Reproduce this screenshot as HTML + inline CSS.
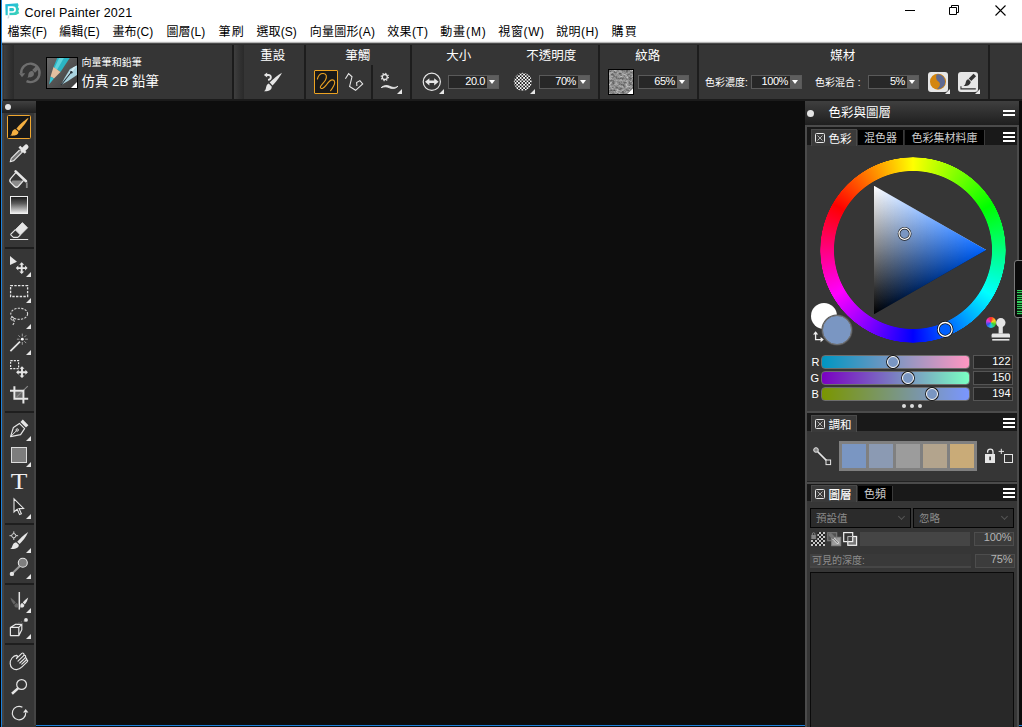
<!DOCTYPE html>
<html lang="zh-Hant">
<head>
<meta charset="utf-8">
<title>Corel Painter 2021</title>
<style>
*{box-sizing:border-box;margin:0;padding:0}
html,body{width:1022px;height:727px;overflow:hidden;background:#0d0d0d}
body{position:relative;font-family:"Liberation Sans","Noto Sans CJK TC",sans-serif;color:#fff;font-size:12px}
.abs{position:absolute}
.cjk{font-family:"Liberation Sans","Noto Sans CJK TC",sans-serif}
svg{position:absolute;overflow:visible}
/* window frame */
#lb0{left:0;top:0;width:1px;height:727px;background:#000}
#lb1{left:1px;top:0;width:1px;height:727px;background:#1c7fd8}
#bb{left:1px;top:725px;width:1021px;height:1px;background:#1c7fd8}
#bb2{left:0;top:726px;width:1022px;height:1px;background:#0a2a4a}
/* title + menu */
#title{left:2px;top:0;width:1020px;height:42px;background:#fff}
#titletxt{left:24.5px;top:4.5px;color:#000;font-size:12.5px;line-height:16px;white-space:nowrap;letter-spacing:0.2px}
.mi{position:absolute;top:24.4px;color:#000;font-size:12px;line-height:17px;white-space:nowrap}
#mshadow{left:2px;top:40px;width:1020px;height:5px;background:linear-gradient(#fbfbfb 0,#fbfbfb 20%,#efefef 20%,#efefef 40%,#b4b4b4 40%,#b4b4b4 60%,#4a4a4a 60%,#4a4a4a 80%,#2b2b2b 80%)}
/* property bar */
#pbar1{left:3px;top:45px;width:229px;height:54px;background:#353535}
#pbar2{left:234px;top:45px;width:788px;height:54px;background:#353535}
.grip{position:absolute;top:0;width:10px;height:54px;background:linear-gradient(90deg,#3e3e3e,#333 50%,#2a2a2a)}
#pgap{left:2px;top:45px;width:1020px;height:56px;background:#1b1b1b;border-left:1px solid #505050}
.vsep{position:absolute;width:2px;background:#1d1d1d}
.plabel{position:absolute;top:49px;font-size:12.5px;line-height:15px;margin-left:-0.8px;color:#fff;white-space:nowrap}
.slabel{position:absolute;top:76px;font-size:10px;line-height:14px;color:#fff;white-space:nowrap}
.inp{position:absolute;top:75px;height:14px;width:51px;background:#272727;border:1px solid #5a5a5a}
.inp b{position:absolute;right:0;top:0;width:11px;height:12px;background:#5e5e5e}
.inp b:after{content:"";position:absolute;left:2px;top:4px;border:4px solid transparent;border-top:4px solid #fff;border-bottom:0;border-left-width:3.5px;border-right-width:3.5px}
.inp span{position:absolute;right:13px;top:-1px;font-size:11px;line-height:13px;color:#fff;font-weight:normal;letter-spacing:-0.4px}
.tri{position:absolute;width:0;height:0;border-left:5px solid transparent;border-bottom:5px solid #e6e6e6}
/* toolbox */
#tbox{left:2px;top:101px;width:34px;height:626px;background:#363636}
#tboxhead{left:2px;top:101px;width:34px;height:12px;background:linear-gradient(#404040,#202020)}
.tsep{position:absolute;left:5px;width:29px;height:2px;background:#1e1e1e}
/* right panel */
#rp{left:805px;top:101px;width:214px;height:626px;background:#3b3b3b}
#rpblack{left:1019px;top:101px;width:3px;height:624px;background:#0b0b0b}
#rphead{left:805px;top:101px;width:214px;height:24px;background:linear-gradient(#3f3f3f,#1f1f1f)}
.tabbar{position:absolute;left:807px;width:210px;background:#191919}
.tabA{position:absolute;background:#3a3a3a;border-top:1px solid #4a4a4a;border-left:1px solid #4a4a4a;border-right:1px solid #4a4a4a}
.tabI{position:absolute;background:#000;color:#cfcfcf;font-size:11px;line-height:16px;text-align:center;white-space:nowrap;box-shadow:1px 0 0 #3a3a3a,-1px 0 0 #2c2c2c}
.tabtxt{position:absolute;font-size:11.5px;line-height:14px;margin-top:0.6px;margin-left:-0.5px;color:#fff;white-space:nowrap}
.xbox{position:absolute;width:10px;height:10px;border:1px solid #e8e8e8;border-radius:1.5px}
.ham{position:absolute;left:1003px;width:12px;height:2px;background:#fff}
.pbody{position:absolute;left:807px;width:210px;background:#363636}

.rgbl{font-size:11px;line-height:14px;color:#fff}
.sl{left:821px;width:149px;height:14px;border-radius:4px;border:1px solid #6e6e6e}
.th{width:12px;height:12px;border-radius:50%;background:#7a96c2;border:1.2px solid #fff;box-shadow:0 0 0 0.9px #151515}
.vb{left:973px;width:40px;height:14px;background:#262626;border:1px solid #555}
.vb span{position:absolute;right:1.5px;top:-2.5px;font-size:11px;line-height:14px;color:#fff;letter-spacing:0px}
.dot3{top:404px;width:4px;height:4px;border-radius:50%;background:#dcdcdc}
.sw{top:444px;width:24px;height:24px}
.dd{top:508px;height:20px;background:#2b2b2b;border:1px solid #050505}
.dd span{position:absolute;left:5px;top:2px;font-size:10.5px;line-height:14px;color:#8a8a8a;white-space:nowrap}
.dd i{position:absolute;right:6px;top:5px;width:5px;height:5px;border-right:1px solid #555;border-bottom:1px solid #555;transform:rotate(45deg)}
.pv{height:14px;background:#3c3c3c;border:1px solid #4d4d4d}
.pv span{position:absolute;right:1.5px;top:-3.5px;font-size:11px;line-height:14px;color:#b4b4b4;letter-spacing:-0.1px}
</style>
</head>
<body>
<!-- TITLE -->
<div class="abs" id="title"></div>
<div class="abs" id="titletxt">Corel Painter 2021</div>
<!-- MENU -->
<div class="mi" style="left:7.5px;letter-spacing:0.07px">檔案(F)</div>
<div class="mi" style="left:59.2px;letter-spacing:0.12px">編輯(E)</div>
<div class="mi" style="left:112.5px;letter-spacing:0.03px">畫布(C)</div>
<div class="mi" style="left:166.6px;letter-spacing:0px">圖層(L)</div>
<div class="mi" style="left:218.5px;letter-spacing:1.3px">筆刷</div>
<div class="mi" style="left:256.5px;letter-spacing:0.08px">選取(S)</div>
<div class="mi" style="left:309.8px;letter-spacing:0.2px">向量圖形(A)</div>
<div class="mi" style="left:387.2px;letter-spacing:0.35px">效果(T)</div>
<div class="mi" style="left:440.2px;letter-spacing:0.9px">動畫(M)</div>
<div class="mi" style="left:498.3px;letter-spacing:0.62px">視窗(W)</div>
<div class="mi" style="left:556.2px;letter-spacing:0.43px">說明(H)</div>
<div class="mi" style="left:611.5px;letter-spacing:1.3px">購買</div>
<div class="abs" id="mshadow"></div>
<!-- PROPERTY BAR -->
<div class="abs" id="pgap"></div>
<div class="abs" id="pbar1"><div class="grip" style="left:1px"></div></div>
<div class="abs" id="pbar2"><div class="grip" style="left:0"></div></div>
<!-- app icon -->
<svg style="left:5px;top:3px" width="15" height="15" viewBox="0 0 15 15">
  <defs><linearGradient id="ig" x1="0" y1="0" x2="1" y2="1"><stop offset="0" stop-color="#18b4e4"/><stop offset="1" stop-color="#3fd6b4"/></linearGradient></defs>
  <path d="M0.3 1.2 L12.8 0.2 L13.6 2.2 L12.9 4 L14.2 6 L13.2 8 L14.3 10.2 L11 12 L0.6 12.2 Z" fill="url(#ig)"/>
  <path d="M3.6 12.6 V4.2 H7.7 A2.4 2.4 0 0 1 7.7 9 H3.6" fill="none" stroke="#fff" stroke-width="1.7"/>
  <path d="M3.6 12.4 V14.4 L2.6 15.4" fill="none" stroke="#d4d9de" stroke-width="1.3"/>
</svg>
<!-- window controls -->
<svg style="left:900px;top:0" width="122" height="22" viewBox="0 0 122 22" fill="none" stroke="#000" stroke-width="1">
  <path d="M5 10.5 H15"/>
  <path d="M49.5 7.5 H56.5 V14.5 H49.5 Z M51.5 7.5 V5.5 H58.5 V12.5 H56.5"/>
  <path d="M95.5 5.5 L105.5 15.5 M105.5 5.5 L95.5 15.5" stroke-width="1.1"/>
</svg>

<!-- brush selector -->
<svg style="left:19px;top:62px" width="23" height="23" viewBox="0 0 23 23" fill="none" stroke="#6e6e6e">
  <path d="M7.5 19.2 A9.2 9.2 0 1 0 2.2 11.4" stroke-width="2.4"/>
  <path d="M0 11.3 L6.2 11.3 L3 15.2 Z" fill="#6e6e6e" stroke="none"/>
  <path d="M18.6 5.4 L14.6 9.4" stroke-width="4"/>
  <path d="M13.6 9.2 C15.6 10.6 15.4 13.6 13 14.8 C11.4 15.6 9.6 15 8.4 16 C9.4 14.6 9 13 9.6 11.4 C10.2 9.6 12 8.6 13.6 9.2 Z" fill="#6e6e6e" stroke="none"/>
</svg>
<div class="abs" style="left:46px;top:57px;width:32px;height:32px;background:linear-gradient(135deg,#6a6a6a,#3c3c3c);border:1px solid #000;overflow:hidden">
  <svg style="left:0;top:0" width="30" height="30" viewBox="0 0 30 30">
    <path d="M11 -2 L24 -2 L13.5 14 L6.5 9 Z" fill="#2bb5c4"/>
    <path d="M13 -2 L18 -2 L10 12 L7.5 10 Z" fill="#5fd3dc"/>
    <path d="M6.5 9 L13.5 14 L7 20.5 L3.5 18.5 Z" fill="#e2bfa0"/>
    <path d="M3.5 18.5 L7 20.5 L2 26.5 Z" fill="#35c3d3"/>
    <path d="M30 7.5 L23 11 L17.5 20 L14 27 L21 23 L30 17 Z" fill="#a9d4e0"/>
    <path d="M30 7.5 L26 9.5 L20 18 L14 27 L24.5 15 Z" fill="#d5edf3"/>
    <path d="M14 27 L24 14.5" stroke="#26323a" stroke-width="1.2"/>
    <circle cx="24.3" cy="14.3" r="1.3" fill="#26323a"/>
    <path d="M30 24 V30 H24 Z" fill="#fff"/>
  </svg>
</div>
<div class="abs" style="left:81.5px;top:56px;font-size:10px;line-height:13px;white-space:nowrap;letter-spacing:0.05px">向量筆和鉛筆</div>
<div class="abs" style="left:81.5px;top:73px;font-size:13.4px;line-height:18px;white-space:nowrap">仿真 2B 鉛筆</div>

<!-- separators -->
<div class="vsep" style="left:304px;top:45px;height:54px"></div>
<div class="vsep" style="left:371px;top:65px;height:34px"></div>
<div class="vsep" style="left:410px;top:45px;height:54px"></div>
<div class="vsep" style="left:598px;top:45px;height:54px"></div>
<div class="vsep" style="left:697px;top:45px;height:54px"></div>
<div class="vsep" style="left:988px;top:45px;height:54px"></div>

<!-- labels -->
<div class="plabel" style="left:261px">重設</div>
<div class="plabel" style="left:346px">筆觸</div>
<div class="plabel" style="left:447px">大小</div>
<div class="plabel" style="left:527px">不透明度</div>
<div class="plabel" style="left:636px">紋路</div>
<div class="plabel" style="left:831px">媒材</div>

<!-- reset brush icon -->
<svg style="left:263px;top:72px" width="20" height="20" viewBox="0 0 20 20">
  <path d="M18.9 0.8 C15 3 9.6 7.6 6.7 10.5 L9.5 13.6 C12.6 10.4 17 5 18.9 0.8 Z" fill="#e6e6e6"/>
  <path d="M5.7 11.4 L8.7 14.4 C9 17.2 6.6 19.4 1 19.2 C3 18 2.8 16 3.4 14.2 C3.8 12.8 4.7 11.8 5.7 11.4 Z" fill="#e6e6e6"/>
  <path d="M3.6 3 H5.4 C8.6 3 8.8 7.6 5 7.9" fill="none" stroke="#e6e6e6" stroke-width="1.9"/>
  <path d="M4.2 0.4 L0.9 3 L4.2 5.6 Z" fill="#e6e6e6"/>
</svg>

<!-- stroke type buttons -->
<div class="abs" style="left:314px;top:70px;width:24px;height:24px;background:#191919;border:1px solid #eba222;border-radius:1px"></div>
<svg style="left:314px;top:70px" width="24" height="24" viewBox="0 0 24 24" fill="none" stroke="#eba222" stroke-width="1.1" stroke-linecap="round">
  <path d="M3.4 9 C4.4 5.2 7 3.3 9.4 3.5 C12.8 3.8 13 7 11.5 10 C10 13 5.6 15.6 6.4 17.6 C7.2 19.5 10 18 12.2 15.2 C14 12.6 16 9.6 18.6 9.9 C21.4 10.3 21 13.5 19.6 16 C18.8 17.6 17.8 19.2 16.6 20.6"/>
</svg>
<svg style="left:344px;top:72px" width="20" height="20" viewBox="0 0 20 20" fill="none" stroke="#e6e6e6" stroke-width="1.1" stroke-linejoin="miter">
  <path d="M1.4 6.8 L4.6 1.6 L8 4.8 L5.6 14.4 L11.6 18.3 L18.7 12 L15.9 8.6 L12.6 10.6 L12.9 14"/>
</svg>
<svg style="left:379px;top:72px" width="24" height="24" viewBox="0 0 24 24" fill="none" stroke="#e6e6e6">
  <circle cx="5.8" cy="5" r="2.5" stroke-width="1.3"/>
  <circle cx="5.8" cy="5" r="3.6" stroke-width="1.2" stroke-dasharray="1.25 1.58"/>
  <path d="M2.2 15.6 C4.4 13.6 7.6 12.9 10 14 C12.6 15.2 15.4 16.4 19 14.2 C16 17.4 12.6 16.8 10 15.6 C7.4 14.4 5 14.6 2.2 15.6 Z" fill="#e6e6e6" stroke-width="0.9" stroke-linejoin="round"/>
</svg>
<div class="tri" style="left:397px;top:89px"></div>

<!-- size -->
<svg style="left:422px;top:72.4px" width="20" height="20" viewBox="0 0 20 20">
  <circle cx="9.8" cy="9.8" r="8.6" fill="none" stroke="#e6e6e6" stroke-width="1.2"/>
  <path d="M3 9.8 L7.4 6.2 V8.6 H12.2 V6.2 L16.6 9.8 L12.2 13.4 V11 H7.4 V13.4 Z" fill="#e6e6e6"/>
</svg>
<div class="tri" style="left:439px;top:89px"></div>
<div class="inp" style="left:448px"><span>20.0</span><b></b></div>

<!-- opacity -->
<svg style="left:513px;top:72px" width="20" height="20" viewBox="0 0 20 20">
  <defs>
    <pattern id="chk" width="3.4" height="3.4" patternUnits="userSpaceOnUse"><rect width="3.4" height="3.4" fill="#fff"/><rect width="1.7" height="1.7" fill="#1c1c1c"/><rect x="1.7" y="1.7" width="1.7" height="1.7" fill="#1c1c1c"/></pattern>
  </defs>
  <circle cx="9.8" cy="9.8" r="9" fill="url(#chk)"/>
</svg>
<div class="tri" style="left:530px;top:89px"></div>
<div class="inp" style="left:539px"><span>70%</span><b></b></div>

<!-- grain -->
<div class="abs" style="left:608px;top:69px;width:26px;height:26px;border:1px solid #000;background:#8f8f8f;overflow:hidden">
  <svg style="left:0;top:0" width="24" height="24" viewBox="0 0 24 24">
    <filter id="nz" x="0" y="0" width="100%" height="100%" color-interpolation-filters="sRGB"><feTurbulence type="fractalNoise" baseFrequency="0.3 0.5" numOctaves="3" seed="7"/><feColorMatrix type="matrix" values="0.8 0 0 0 0.15  0.8 0 0 0 0.15  0.8 0 0 0 0.15  0 0 0 0 1"/></filter>
    <rect width="24" height="24" fill="#777"/>
    <rect width="24" height="24" filter="url(#nz)"/>
    <path d="M24 18.5 V24 H18.5 Z" fill="#fff"/>
  </svg>
</div>
<div class="inp" style="left:638px"><span>65%</span><b></b></div>

<!-- media -->
<div class="slabel" style="left:705px">色彩濃度:</div>
<div class="inp" style="left:751px"><span>100%</span><b></b></div>
<div class="slabel" style="left:815px">色彩混合 :</div>
<div class="inp" style="left:868px"><span>5%</span><b></b></div>

<div class="abs" style="left:928px;top:72px;width:20px;height:20px;background:#e6e6e6;border-radius:3px"></div>
<svg style="left:928px;top:72px" width="20" height="20" viewBox="0 0 20 20">
  <circle cx="10" cy="9.65" r="8" fill="#d4860f"/>
  <path d="M8.6 2.5 A7.3 7.3 0 1 1 9 16.9 C12.4 14.8 12.8 11.2 10.4 9.6 C8 8 7.6 5 8.6 2.5 Z" fill="#5f6a92"/>
</svg>
<div class="tri" style="left:945px;top:89px"></div>
<div class="abs" style="left:958px;top:72px;width:20px;height:20px;background:#e6e6e6;border-radius:3px"></div>
<svg style="left:958px;top:72px" width="20" height="20" viewBox="0 0 20 20" fill="#333">
  <path d="M16.8 3 L12 7.8" stroke="#333" stroke-width="3.6" fill="none"/>
  <path d="M10.5 7.3 L12.7 9.7 C12.5 12.6 9.6 14.4 5.6 14 C7.6 12.8 7.4 11 8 9.4 C8.5 8 9.5 7.3 10.5 7.3 Z"/>
  <path d="M2.4 14.2 H3.5 V16.2 H17.8 V17.6 H2.4 Z"/>
</svg>
<div class="tri" style="left:975px;top:89px"></div>


<div class="abs" id="bb"></div>
<!-- TOOLBOX -->
<div class="abs" id="tbox"></div>
<div class="abs" id="tboxhead"></div>
<div class="abs" style="left:2px;top:113px;width:2px;height:612px;background:#424242"></div>
<div class="abs" style="left:34px;top:113px;width:2px;height:612px;background:#444"></div>
<div class="abs" style="left:4.7px;top:103.8px;width:6.6px;height:6.6px;border-radius:50%;background:#e4e4e4"></div>
<!-- brush (selected) -->
<div class="abs" style="left:7px;top:115px;width:24px;height:24px;background:#171717;border:1px solid #f0a72e;border-radius:1.5px"></div>
<svg style="left:7px;top:115px" width="24" height="24" viewBox="0 0 24 24" fill="#f5b041">
  <path d="M21.6 2.8 C17 5.4 11.6 10.8 9.4 13.6 L12 16 C14.6 13.2 19.4 7.8 21.6 2.8 Z"/>
  <path d="M8.6 14.2 L11.4 16.8 C11.6 19.8 8.4 21.2 3 20.6 C5.2 19.6 4.6 17.6 5.6 15.8 C6.3 14.6 7.5 14 8.6 14.2 Z"/>
</svg>
<!-- eyedropper  center y 153 -->
<svg style="left:7px;top:141px" width="24" height="24" viewBox="0 0 24 24" fill="none" stroke="#e6e6e6">
  <path d="M15.6 9.4 L19.2 5.8" stroke-width="4.6" stroke-linecap="round"/>
  <path d="M12.4 5.6 L18.6 11.8" stroke-width="2.6"/>
  <path d="M12.6 9 L4.2 17.4 L3.2 20.8 L6.6 19.8 L15 11.4" stroke-width="1.1" fill="#777" stroke-linejoin="round"/>
</svg>
<!-- bucket center y 179 -->
<svg style="left:7px;top:167px" width="24" height="24" viewBox="0 0 24 24" fill="none" stroke="#e6e6e6">
  <path d="M5.6 13.6 H16 L11 19.2 C10 20.2 8.6 20.2 7.6 19.2 L4.4 16 C3.8 15.2 4.4 14.2 5.6 13.6 Z" fill="#8c8c8c" stroke="none"/>
  <path d="M8.8 5.6 L3.8 11.4 C2.6 12.8 2.6 14.4 3.8 15.6 L7.4 19.2 C8.6 20.4 10.2 20.4 11.4 19.2 L16.6 13.4" stroke-width="1.3"/>
  <path d="M8.6 4.4 L19 14.2" stroke-width="2.6" stroke-linecap="round"/>
  <path d="M19.8 15.4 V21" stroke="#8a8a8a" stroke-width="1.8"/>
</svg>
<!-- gradient center y 205 -->
<div class="abs" style="left:10px;top:196px;width:18px;height:18px;border:1px solid #f0f0f0;background:linear-gradient(#1c1c1c,#5a5a5a 40%,#eaeaea)"></div>
<!-- eraser center y 231 -->
<svg style="left:7px;top:219px" width="24" height="24" viewBox="0 0 24 24" fill="none" stroke="#e6e6e6">
  <path d="M15.4 3.6 L20.6 8.8 L13.4 16 L8.2 10.8 Z" fill="#e6e6e6" stroke-width="0.8" stroke-linejoin="round"/>
  <path d="M8.2 10.8 L4 15 C3.6 15.4 3.6 15.8 4 16.2 L6.4 18.4 H10.8 L13.4 16" stroke-width="1.1" stroke-linejoin="round"/>
  <path d="M3 20.5 H21.2" stroke-width="1"/>
</svg>
<div class="tsep" style="top:247px"></div>
<!-- move center y 265 -->
<svg style="left:7px;top:253px" width="24" height="24" viewBox="0 0 24 24" fill="#e6e6e6">
  <path d="M3 3 V12 L10 8.8 Z"/>
  <path d="M14.70 9.20 L17.20 11.70 L15.65 11.70 L15.65 14.15 L18.10 14.15 L18.10 12.60 L20.60 15.10 L18.10 17.60 L18.10 16.05 L15.65 16.05 L15.65 18.50 L17.20 18.50 L14.70 21.00 L12.20 18.50 L13.75 18.50 L13.75 16.05 L11.30 16.05 L11.30 17.60 L8.80 15.10 L11.30 12.60 L11.30 14.15 L13.75 14.15 L13.75 11.70 L12.20 11.70 Z"/>
</svg>
<div class="tri" style="left:26px;top:272px"></div>
<!-- rect select center y 291 -->
<svg style="left:7px;top:279px" width="24" height="24" viewBox="0 0 24 24" fill="none" stroke="#e6e6e6">
  <rect x="3.6" y="6.7" width="17" height="10.8" stroke-width="1.3" stroke-dasharray="2.4 1.3"/>
</svg>
<div class="tri" style="left:26px;top:298px"></div>
<!-- lasso center y 317 -->
<svg style="left:7px;top:305px" width="24" height="24" viewBox="0 0 24 24" fill="none" stroke="#d8d8d8">
  <ellipse cx="12.2" cy="8.8" rx="8.4" ry="5.6" stroke-width="1.1" stroke-dasharray="2.2 1.3"/>
  <circle cx="5.4" cy="13.6" r="1.5" stroke-width="1"/>
  <path d="M6.6 14.8 C8 16.6 7 19 5 20.6" stroke-width="1.1" stroke-dasharray="2.2 1.2"/>
</svg>
<div class="tri" style="left:26px;top:324px"></div>
<!-- wand center y 343 -->
<svg style="left:7px;top:331px" width="24" height="24" viewBox="0 0 24 24" fill="none" stroke="#e6e6e6">
  <path d="M3.4 20.2 L13 10.6" stroke-width="1.7"/>
  <circle cx="15.3" cy="8.2" r="1.4" fill="#fff" stroke="none"/>
  <g stroke="#a8a8a8" stroke-width="0.9">
    <path d="M15.3 5.4 V2.6 M15.3 11 V13.8 M18.1 8.2 H20.9 M12.5 8.2 H9.9 M17.3 6.2 L19.2 4.3 M13.3 6.2 L11.5 4.4 M17.3 10.2 L19.2 12.1"/>
  </g>
</svg>
<div class="tri" style="left:26px;top:350px"></div>
<!-- transform select center y 369 -->
<svg style="left:7px;top:357px" width="24" height="24" viewBox="0 0 24 24" fill="#e6e6e6">
  <rect x="3.6" y="3.6" width="8" height="8" fill="none" stroke="#e6e6e6" stroke-width="1.2" stroke-dasharray="2.1 1.1"/>
  <path d="M15.00 9.30 L17.50 11.80 L15.95 11.80 L15.95 14.25 L18.40 14.25 L18.40 12.70 L20.90 15.20 L18.40 17.70 L18.40 16.15 L15.95 16.15 L15.95 18.60 L17.50 18.60 L15.00 21.10 L12.50 18.60 L14.05 18.60 L14.05 16.15 L11.60 16.15 L11.60 17.70 L9.10 15.20 L11.60 12.70 L11.60 14.25 L14.05 14.25 L14.05 11.80 L12.50 11.80 Z"/>
</svg>
<!-- crop center y 395 -->
<svg style="left:7px;top:383px" width="24" height="24" viewBox="0 0 24 24" fill="none" stroke="#e6e6e6">
  <rect x="8.4" y="8.8" width="7" height="6.2" fill="#666" stroke="none"/>
  <path d="M9.6 14.2 L20.8 3.2" stroke="#8a8a8a" stroke-width="1.1"/>
  <path d="M7.4 3.2 V15.8 H21.2 M3 7.8 H16.4 V20.6" stroke-width="2"/>
</svg>
<div class="tsep" style="top:411px"></div>
<!-- pen center y 429 -->
<svg style="left:7px;top:417px" width="24" height="24" viewBox="0 0 24 24" fill="none" stroke="#e6e6e6">
  <path d="M14.6 3.8 L20.2 9.4" stroke-width="3.4"/>
  <path d="M3.6 19.6 L6.4 10.4 L12.4 6.4 L17.6 11.6 L13.6 17.6 Z" stroke-width="1.2" stroke-linejoin="round"/>
  <path d="M3.8 19.4 L9.6 13.6" stroke-width="1"/>
  <circle cx="10.2" cy="13" r="1.2" stroke-width="1"/>
</svg>
<div class="tri" style="left:26px;top:436px"></div>
<!-- shape center y 455 -->
<div class="abs" style="left:11px;top:447px;width:16px;height:16px;background:#7d7d7d;border:1px solid #dcdcdc"></div>
<div class="tri" style="left:26px;top:462px"></div>
<!-- text center y 481 -->
<svg style="left:7px;top:469px" width="24" height="24" viewBox="0 0 24 24">
  <text x="12.2" y="20" text-anchor="middle" font-family="Liberation Serif, serif" font-size="23.5" fill="#f0f0f0" transform="translate(12.2 0) scale(1.16 1) translate(-12.2 0)">T</text>
</svg>
<!-- arrow center y 507 -->
<svg style="left:7px;top:495px" width="24" height="24" viewBox="0 0 24 24" fill="#2a2a2a" stroke="#e6e6e6">
  <path d="M7 3.8 V17 L10.2 14.2 L12.6 19.6 L14.4 18.8 L12 13.6 L16.6 13.4 Z" stroke-width="1.1" stroke-linejoin="miter"/>
</svg>
<div class="tri" style="left:26px;top:514px"></div>
<div class="tsep" style="top:523px"></div>
<!-- clone center y 541 -->
<svg style="left:7px;top:529px" width="24" height="24" viewBox="0 0 24 24" fill="#e6e6e6">
  <path d="M21.2 3 C17 5.6 12.6 10 10.2 12.8 L12.6 15 C15.2 12.4 19.2 8 21.2 3 Z"/>
  <path d="M9.4 13.6 L11.8 15.8 C12 18.4 9.4 20.4 3.2 20 C5.2 19 5 17.2 6 15.4 C6.8 14.1 8.2 13.4 9.4 13.6 Z"/>
  <g fill="none" stroke="#e6e6e6" stroke-width="0.9"><circle cx="6.8" cy="6.7" r="2.1"/><path d="M6.8 2.4 V4.6 M6.8 8.8 V11 M2.5 6.7 H4.7 M8.9 6.7 H11.1"/></g>
</svg>
<div class="tri" style="left:26px;top:548px"></div>
<!-- dodge center y 567 -->
<svg style="left:7px;top:555px" width="24" height="24" viewBox="0 0 24 24">
  <path d="M12.6 11.2 L5 18.8" stroke="#9a9a9a" stroke-width="2"/>
  <circle cx="15.8" cy="7.8" r="4.5" fill="#7e7e7e" stroke="#e6e6e6" stroke-width="1.1"/>
  <circle cx="4.9" cy="18.9" r="2.2" fill="#e6e6e6"/>
</svg>
<div class="tri" style="left:26px;top:574px"></div>
<div class="tsep" style="top:583px"></div>
<!-- mirror center y 601 -->
<svg style="left:7px;top:589px" width="24" height="24" viewBox="0 0 24 24">
  <path d="M12.3 3 V20.6" stroke="#e6e6e6" stroke-width="1.5"/>
  <path d="M21.2 8.4 C19 9.8 17 12 15.8 13.4 L17.8 15.4 C19.2 13.8 20.6 11.2 21.2 8.4 Z" fill="#e6e6e6"/>
  <path d="M15.2 13.9 L17.3 16 C17.5 18 15.6 19 13.4 18.4 C13 16 13.6 14.2 15.2 13.9 Z" fill="#e6e6e6"/>
  <path d="M3.4 8.4 C5.6 9.8 7.6 12 8.8 13.4 L6.8 15.4 C5.4 13.8 4 11.2 3.4 8.4 Z" fill="#666"/>
  <path d="M9.4 13.9 L7.3 16 C7.1 18 9 19 11.2 18.4 C11.6 16 11 14.2 9.4 13.9 Z" fill="#666"/>
</svg>
<div class="tri" style="left:26px;top:608px"></div>
<!-- cube center y 627 -->
<svg style="left:7px;top:615px" width="24" height="24" viewBox="0 0 24 24" fill="none" stroke="#e6e6e6">
  <path d="M3.4 12.4 H11.8 V20.6 H3.4 Z M3.4 12.4 L8.2 9.4 H14.8 L11.8 12.4 M14.8 9.4 V14.8 L11.8 20.6" stroke-width="1.2" stroke-linejoin="round"/>
  <path d="M18 6 L14.8 9.4 M17.6 5.6 L9 9" stroke="#777" stroke-width="0.8" stroke-dasharray="1.4 1.4"/>
  <circle cx="19" cy="4.9" r="1.9" fill="#e6e6e6" stroke="none"/>
</svg>
<div class="tri" style="left:26px;top:634px"></div>
<div class="tsep" style="top:643px"></div>
<!-- hand center y 661 -->
<svg style="left:7px;top:649px" width="24" height="24" viewBox="0 0 24 24" fill="none" stroke="#e6e6e6" stroke-width="1.15" stroke-linecap="round" stroke-linejoin="round">
  <path d="M9.6 6.4 C6.2 6.6 3 10.4 3.2 14.6 C3.4 18.6 6.4 20.8 9.6 20.6 C12 20.4 13.4 19.4 15 17.8 L20.4 12.6 C21.2 11.6 20.2 10.4 19.2 11 C20.2 9.8 19.4 8.4 18.2 8.8 C19.2 7.4 18.4 5.8 17 6.4 C17.4 4.6 16 3.4 14.8 4.4 L9.4 9.6 C10.6 8.2 10.8 6.6 9.6 6.4 Z"/>
  <path d="M17 6.4 L11 12.2 M18.2 8.8 L12.8 14 M19.2 11 L14.8 15.2"/>
</svg>
<!-- zoom center y 687 -->
<svg style="left:7px;top:675px" width="24" height="24" viewBox="0 0 24 24" fill="none" stroke="#e6e6e6">
  <circle cx="14.6" cy="9.5" r="4.9" stroke-width="1.2"/>
  <path d="M11 13.4 L5 18.8" stroke-width="2.6"/>
</svg>
<!-- rotate center y 713 -->
<svg style="left:7px;top:701px" width="24" height="24" viewBox="0 0 24 24" fill="none" stroke="#e6e6e6">
  <path d="M18.7 11.6 A6.7 6.7 0 1 1 15.4 6.3" stroke-width="1.2"/>
  <path d="M18.7 8 L21.4 11.6 H16 Z" fill="#e6e6e6" stroke="none"/>
</svg>

<!-- RIGHT PANEL -->
<div class="abs" id="rp"></div>
<div class="abs" id="rpblack"></div>
<div class="abs" id="rphead"></div>
<!-- header -->
<div class="abs" style="left:807.3px;top:109.6px;width:7px;height:7px;border-radius:50%;background:#e4e4e4"></div>
<div class="abs" style="left:828.5px;top:105px;font-size:12.5px;line-height:16px;white-space:nowrap">色彩與圖層</div>
<div class="ham" style="top:110px"></div><div class="ham" style="top:114px"></div>
<div class="abs" style="left:805px;top:125px;width:214px;height:2px;background:#4b4b4b"></div>
<div class="abs" style="left:805px;top:127px;width:2px;height:600px;background:#4b4b4b"></div>
<div class="abs" style="left:1017px;top:127px;width:2px;height:600px;background:#4b4b4b"></div>

<!-- COLOR panel -->
<div class="tabbar" style="top:127px;height:18px"></div>
<div class="pbody" style="top:145px;height:267px"></div>
<div class="tabA" style="left:811px;top:129px;width:46px;height:17px"></div>
<div class="xbox" style="left:815px;top:133px"></div>
<svg style="left:815px;top:133px" width="10" height="10" viewBox="0 0 10 10"><path d="M2.5 2.5 L7.5 7.5 M7.5 2.5 L2.5 7.5" stroke="#b0b0b0" stroke-width="1"/></svg>
<div class="tabtxt" style="left:829px;top:131px">色彩</div>
<div class="tabI" style="left:858px;top:130px;width:45px;height:15px">混色器</div>
<div class="tabI" style="left:905px;top:130px;width:79px;height:15px">色彩集材料庫</div>
<div class="ham" style="top:132px"></div><div class="ham" style="top:136px"></div><div class="ham" style="top:140px"></div>

<!-- wheel -->
<div class="abs" style="left:819.5px;top:157.3px;width:186px;height:186px;border-radius:50%;background:conic-gradient(#ffff00,#00ff00 60deg,#00ffff 120deg,#0000ff 180deg,#ff00ff 240deg,#ff0000 300deg,#ffff00 360deg);-webkit-mask:radial-gradient(circle closest-side,transparent 78.6px,#000 79.4px,#000 92.4px,transparent 93px);mask:radial-gradient(circle closest-side,transparent 78.6px,#000 79.4px,#000 92.4px,transparent 93px)"></div>
<div class="abs" style="left:874px;top:185.8px;width:112.2px;height:128.4px;clip-path:polygon(0 0,100% 50%,0 100%);background:linear-gradient(90deg,rgba(0,99,255,0),rgba(0,99,255,1)),conic-gradient(from 230.26deg at 100% 50%,#000 0deg,rgb(0,0,0) 10.00deg,rgb(24,24,24) 14.74deg,rgb(46,46,46) 19.74deg,rgb(68,68,68) 24.74deg,rgb(88,88,88) 29.74deg,rgb(108,108,108) 34.74deg,rgb(128,128,128) 39.74deg,rgb(147,147,147) 44.74deg,rgb(167,167,167) 49.74deg,rgb(187,187,187) 54.74deg,rgb(209,209,209) 59.74deg,rgb(231,231,231) 64.74deg,rgb(255,255,255) 69.48deg,#fff 90deg,#000 200deg)"></div>
<svg style="left:894px;top:223px" width="22" height="22" viewBox="894 223 22 22">
  <circle cx="904.6" cy="233.8" r="5.6" fill="#7a96c2" stroke="#1a1a1a" stroke-width="2.6"/>
  <circle cx="904.6" cy="233.8" r="5.6" fill="none" stroke="#fff" stroke-width="1.2"/>
</svg>
<svg style="left:930px;top:315px" width="30" height="30" viewBox="930 315 30 30">
  <circle cx="945.2" cy="329.4" r="6.9" fill="#0060ff" stroke="#111" stroke-width="2.8"/>
  <circle cx="945.2" cy="329.4" r="6.9" fill="none" stroke="#fff" stroke-width="1.3"/>
</svg>
<!-- swatches -->
<div class="abs" style="left:810.5px;top:303px;width:26px;height:26px;border-radius:50%;background:#fff"></div>
<div class="abs" style="left:821.5px;top:314.5px;width:30px;height:30px;border-radius:50%;background:#7a96c2;border:1.5px solid #6f6f6f;box-shadow:0 0 0 0.6px #555"></div>
<svg style="left:811px;top:329px" width="14" height="14" viewBox="0 0 14 14" fill="none" stroke="#f0f0f0" stroke-width="1.3">
  <path d="M4.6 3.4 V10.6 H11.4"/>
  <path d="M2 5.4 L4.6 2.2 L7.2 5.4 Z M9.6 8 L12.8 10.6 L9.6 13.2 Z" fill="#f0f0f0" stroke="none"/>
</svg>
<!-- stamp icon -->
<div class="abs" style="left:986px;top:317.4px;width:10.4px;height:10.4px;border-radius:50%;background:conic-gradient(#ff2a2a,#ffd21f 60deg,#38d430 120deg,#22c6e8 180deg,#3a4cf0 240deg,#e83ad8 300deg,#ff2a2a 360deg)"></div>
<svg style="left:990px;top:316px" width="22" height="27" viewBox="0 0 22 27" fill="#e4e4e4">
  <circle cx="10.8" cy="6.8" r="4.7"/>
  <path d="M8.6 8 H12.8 V17.6 H8.6 Z"/>
  <path d="M3.2 17.6 H18.4 C19.4 17.6 20 18.2 20 19.2 V21.6 H1.6 V19.2 C1.6 18.2 2.2 17.6 3.2 17.6 Z"/>
  <rect x="2.2" y="23" width="17.2" height="1.6"/>
</svg>
<!-- RGB sliders -->
<div class="abs rgbl" style="left:811.5px;top:354.5px">R</div>
<div class="abs rgbl" style="left:810.5px;top:370.5px">G</div>
<div class="abs rgbl" style="left:811.5px;top:386.5px">B</div>
<div class="abs sl" style="top:355px;background:linear-gradient(90deg,#0096c2,#ff96c2)"></div>
<div class="abs sl" style="top:371px;background:linear-gradient(90deg,#7a00c2,#7affc2)"></div>
<div class="abs sl" style="top:387px;background:linear-gradient(90deg,#7a9600,#7a96ff)"></div>
<div class="abs th" style="left:886.9px;top:355.8px"></div>
<div class="abs th" style="left:902.1px;top:371.8px"></div>
<div class="abs th" style="left:926px;top:387.8px"></div>
<div class="abs vb" style="top:355px"><span>122</span></div>
<div class="abs vb" style="top:371px"><span>150</span></div>
<div class="abs vb" style="top:387px"><span>194</span></div>
<div class="abs dot3" style="left:902px"></div><div class="abs dot3" style="left:910px"></div><div class="abs dot3" style="left:918px"></div>
<div class="abs" style="left:807px;top:411px;width:210px;height:2px;background:#4b4b4b"></div>

<!-- HARMONY panel -->
<div class="tabbar" style="top:413px;height:18px"></div>
<div class="pbody" style="top:431px;height:50px"></div>
<div class="tabA" style="left:811px;top:415px;width:46px;height:17px"></div>
<div class="xbox" style="left:815px;top:419px"></div>
<svg style="left:815px;top:419px" width="10" height="10" viewBox="0 0 10 10"><path d="M2.5 2.5 L7.5 7.5 M7.5 2.5 L2.5 7.5" stroke="#b0b0b0" stroke-width="1"/></svg>
<div class="tabtxt" style="left:829px;top:417px">調和</div>
<div class="ham" style="top:418px"></div><div class="ham" style="top:422px"></div><div class="ham" style="top:426px"></div>
<svg style="left:811px;top:445px" width="22" height="22" viewBox="0 0 22 22" fill="none" stroke="#e6e6e6">
  <path d="M6.6 6.6 L15.6 15.6" stroke-width="1.5"/>
  <circle cx="5" cy="5" r="2.3" fill="#8a8a8a" stroke-width="1"/>
  <rect x="15" y="15" width="4.6" height="4.6" fill="#363636" stroke-width="1"/>
</svg>
<div class="abs" style="left:839px;top:441px;width:138px;height:30px;background:#808080"></div>
<div class="abs sw" style="left:842px;background:#7a96c2"></div>
<div class="abs sw" style="left:869px;background:#8b9ab3"></div>
<div class="abs sw" style="left:896px;background:#9c9c9c"></div>
<div class="abs sw" style="left:923px;background:#b3a48d"></div>
<div class="abs sw" style="left:950px;background:#c9ab78"></div>
<svg style="left:983px;top:447px" width="32" height="18" viewBox="0 0 32 18" fill="none" stroke="#e6e6e6">
  <rect x="2" y="7" width="10" height="9" fill="#e6e6e6" stroke="none"/>
  <path d="M4.6 5.8 V4.8 A2.7 2.7 0 0 1 10 4.8 V7" stroke-width="1.3"/>
  <rect x="6.3" y="9.6" width="1.6" height="3.6" fill="#333" stroke="none"/>
  <path d="M15.6 4.4 H21 M18.3 1.8 V7" stroke-width="1"/>
  <rect x="21.5" y="7.5" width="8" height="8" stroke-width="1"/>
</svg>
<div class="abs" style="left:807px;top:481px;width:210px;height:1px;background:#222"></div>
<div class="abs" style="left:807px;top:482px;width:210px;height:2px;background:#4b4b4b"></div>

<!-- LAYERS panel -->
<div class="tabbar" style="top:484px;height:17px"></div>
<div class="pbody" style="top:501px;height:226px"></div>
<div class="tabA" style="left:811px;top:485px;width:46px;height:17px"></div>
<div class="xbox" style="left:815px;top:489px"></div>
<svg style="left:815px;top:489px" width="10" height="10" viewBox="0 0 10 10"><path d="M2.5 2.5 L7.5 7.5 M7.5 2.5 L2.5 7.5" stroke="#b0b0b0" stroke-width="1"/></svg>
<div class="tabtxt" style="left:829px;top:487px;font-weight:500">圖層</div>
<div class="tabI" style="left:858px;top:486px;width:34px;height:15px">色頻</div>
<div class="ham" style="top:488px"></div><div class="ham" style="top:492px"></div><div class="ham" style="top:496px"></div>
<div class="abs dd" style="left:810px;width:101px"><span>預設值</span><i></i></div>
<div class="abs dd" style="left:913px;width:101px"><span>忽略</span><i></i></div>
<!-- row icons -->
<svg style="left:811px;top:532px" width="48" height="15" viewBox="0 0 48 15">
  <defs><pattern id="chk2" width="4" height="4" patternUnits="userSpaceOnUse"><rect width="4" height="4" fill="#242424"/><rect width="2" height="2" fill="#c6c6c6"/><rect x="2" y="2" width="2" height="2" fill="#c6c6c6"/></pattern></defs>
  <rect x="0" y="0" width="14" height="14" fill="url(#chk2)"/>
  <rect x="0" y="0" width="6.4" height="8" fill="#363636"/>
  <rect x="0.3" y="3" width="4.6" height="4" fill="#858585"/><path d="M1.3 3.2 V2 A1.3 1.3 0 0 1 3.9 2 V3.2" fill="none" stroke="#858585" stroke-width="0.9"/>
  <rect x="16.7" y="0.7" width="9" height="8" fill="#525252" stroke="#787878" stroke-width="1"/>
  <rect x="20.7" y="5.3" width="9" height="8.4" fill="#9c9c9c" stroke="#858585" stroke-width="1"/>
  <rect x="16.7" y="0.7" width="9" height="8" fill="none" stroke="#787878" stroke-width="1" opacity="0.6"/>
  <path d="M21.8 5.8 L26.6 10.6" stroke="#e0e0e0" stroke-width="2.6" stroke-linecap="round"/>
  <path d="M21.8 5.8 L26.4 10.4" stroke="#777" stroke-width="1.2" stroke-linecap="round"/>
  <path d="M19.4 2.8 L21.6 5" stroke="#757575" stroke-width="3.6" stroke-linecap="round"/>
  <rect x="36.8" y="4.5" width="8.8" height="8.8" fill="#777" stroke="#f0f0f0" stroke-width="1.2"/>
  <rect x="32.7" y="0.6" width="9" height="9" fill="#363636" fill-opacity="0.8" stroke="#f0f0f0" stroke-width="1.2"/>
  <path d="M36.8 9.6 V4.5 H41.7" fill="none" stroke="#b0b0b0" stroke-width="1"/>
</svg>
<div class="abs" style="left:860px;top:532px;width:110px;height:14px;background:#454545"></div>
<div class="abs pv" style="left:974px;top:532px;width:40px"><span>100%</span></div>
<div class="abs" style="left:810px;top:554px;width:161px;height:14px;background:linear-gradient(90deg,#414141 0,#414141 12px,#393939 12px);border-bottom:2px solid #464646"></div>
<div class="abs" style="left:812px;top:554px;font-size:10px;line-height:13px;color:#8c8c8c;white-space:nowrap">可見的深度:</div>
<div class="abs pv" style="left:975px;top:554px;width:40px"><span>75%</span></div>
<div class="abs" style="left:810px;top:572px;width:204px;height:160px;background:#282828;border:1px solid #0a0a0a"></div>

<!-- right edge widget -->
<div class="abs" style="left:1014px;top:259.5px;width:14px;height:58px;border:1px solid #7a7a7a;border-radius:3px;background:#0a0a0a"></div>
<div class="abs" style="left:1016.5px;top:290px;width:8px;height:25px;background:repeating-linear-gradient(#2fcf5a 0,#2fcf5a 1.1px,#0d2a14 1.1px,#0d2a14 2.3px)"></div>

<!-- FRAME -->
<div class="abs" id="lb0"></div>
<div class="abs" id="lb1"></div>
</body>
</html>
